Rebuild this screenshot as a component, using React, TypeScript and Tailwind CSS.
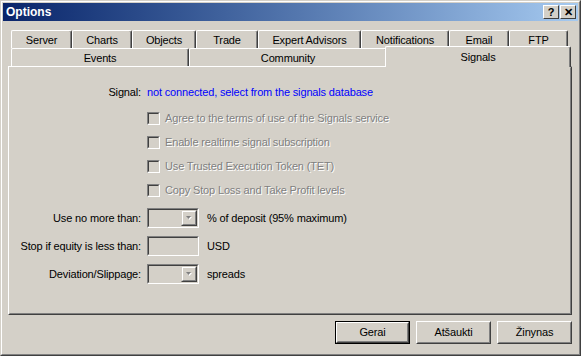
import React from "react";

const row1 = [
  { t: "Server", w: 61 },
  { t: "Charts", w: 60 },
  { t: "Objects", w: 64 },
  { t: "Trade", w: 62 },
  { t: "Expert Advisors", w: 103 },
  { t: "Notifications", w: 88 },
  { t: "Email", w: 60 },
  { t: "FTP", w: 59 },
];

function Tab({ t, w, h = 18 }: { t: string; w: number; h?: number }) {
  return (
    <div
      className="flex items-center justify-center border-l border-t border-r border-l-white border-t-white border-r-[#404040] rounded-tl-[2px] rounded-tr-[2px] shadow-[inset_-1px_0_0_#808080] text-black"
      style={{ width: w, height: h }}
    >
      <span className="pt-[1px]">{t}</span>
    </div>
  );
}

function Sunken({ w, h, children }: { w: number; h: number; children?: React.ReactNode }) {
  return (
    <div
      className="border border-t-[#808080] border-l-[#808080] border-r-white border-b-white bg-[#d4d0c8]"
      style={{ width: w, height: h }}
    >
      <div className="w-full h-full border border-t-[#404040] border-l-[#404040] border-r-[#d4d0c8] border-b-[#d4d0c8] flex justify-end">
        {children}
      </div>
    </div>
  );
}

function Check({ label }: { label: string }) {
  return (
    <div className="flex items-center h-[13px]">
      <Sunken w={13} h={13} />
      <span className="ml-[5px] text-[#808080] [text-shadow:1px_1px_0_#ffffff]">{label}</span>
    </div>
  );
}

function Combo() {
  return (
    <Sunken w={52} h={20}>
      <div className="w-[16px] h-full border border-t-[#d4d0c8] border-l-[#d4d0c8] border-r-[#404040] border-b-[#404040] bg-[#d4d0c8]">
        <div className="w-full h-full border border-t-white border-l-white border-r-[#808080] border-b-[#808080] flex items-center justify-center">
          <svg width="7" height="5" viewBox="0 0 7 5">
            <path d="M1 1h5l-2.5 3z" fill="#ffffff" />
            <path d="M0 0h5L2.5 3z" fill="#808080" />
          </svg>
        </div>
      </div>
    </Sunken>
  );
}

function Btn({ t, def }: { t: string; def?: boolean }) {
  return (
    <div className={"w-[75px] h-[23px] " + (def ? "border border-black" : "")}>
      <div className="w-full h-full border border-t-white border-l-white border-r-[#404040] border-b-[#404040]">
        <div className="w-full h-full border border-t-[#d4d0c8] border-l-[#d4d0c8] border-r-[#808080] border-b-[#808080] flex items-center justify-center text-black">
          {t}
        </div>
      </div>
    </div>
  );
}

export default function App() {
  return (
    <div className="w-[581px] h-[356px] bg-[#d4d0c8] font-['Liberation_Sans',Arial,sans-serif] text-[11px] leading-[13px] tracking-[-0.15px] select-none">
      <div className="w-full h-full border border-t-[#d4d0c8] border-l-[#d4d0c8] border-r-[#404040] border-b-[#404040]">
        <div className="w-full h-full border border-t-white border-l-white border-r-[#808080] border-b-[#808080] p-[1px] flex flex-col">
          {/* title bar */}
          <div className="h-[18px] flex items-center bg-gradient-to-r from-[#0a246a] to-[#a6caf0] pl-[3px] pr-[2px]">
            <span className="text-white font-bold text-[12px] tracking-normal">Options</span>
            <div className="ml-auto flex">
              {["?", "✕"].map((c, i) => (
                <div
                  key={i}
                  className="w-[16px] h-[14px] border border-t-white border-l-white border-r-[#404040] border-b-[#404040] bg-[#d4d0c8] flex items-center justify-center font-bold text-black text-[11px]"
                  style={{ marginLeft: i ? 1 : 0 }}
                >
                  {c}
                </div>
              ))}
            </div>
          </div>

          {/* tabs */}
          <div className="pl-[5px] pt-[9px] flex flex-col">
            <div className="flex pl-[3px]">
              {row1.map((r) => (
                <Tab key={r.t} t={r.t} w={r.w} />
              ))}
            </div>
            <div className="flex pl-[3px] h-[18px] items-end">
              <Tab t="Events" w={178} />
              <Tab t="Community" w={198} />
              <div className="relative w-[184px] h-[18px]">
                <div className="absolute left-[-2px] top-[-2px] w-[186px] h-[21px] bg-[#d4d0c8] border-l border-t border-r border-l-white border-t-white border-r-[#404040] rounded-tl-[2px] rounded-tr-[2px] shadow-[inset_-1px_0_0_#808080] flex justify-center pt-[4px] z-10">
                  Signals
                </div>
              </div>
            </div>

            {/* panel */}
            <div className="w-[564px] h-[249px] border border-t-white border-l-white border-r-[#404040] border-b-[#404040]">
              <div className="w-full h-full border border-transparent border-r-[#808080] border-b-[#808080] pt-[18px] flex flex-col">
                <div className="flex items-center h-[13px]">
                  <span className="w-[131px] text-right">Signal:</span>
                  <span className="ml-[6px] text-[#0000ff]">not connected, select from the signals database</span>
                </div>
                <div className="ml-[137px] mt-[13px] flex flex-col gap-[11px]">
                  <Check label="Agree to the terms of use of the Signals service" />
                  <Check label="Enable realtime signal subscription" />
                  <Check label="Use Trusted Execution Token (TET)" />
                  <Check label="Copy Stop Loss and Take Profit levels" />
                </div>
                <div className="mt-[11px] flex flex-col gap-[8px]">
                  <div className="flex items-center h-[20px]">
                    <span className="w-[131px] text-right">Use no more than:</span>
                    <div className="ml-[6px]"><Combo /></div>
                    <span className="ml-[8px]">% of deposit (95% maximum)</span>
                  </div>
                  <div className="flex items-center h-[20px]">
                    <span className="w-[131px] text-right">Stop if equity is less than:</span>
                    <div className="ml-[6px]"><Sunken w={52} h={20} /></div>
                    <span className="ml-[8px]">USD</span>
                  </div>
                  <div className="flex items-center h-[20px]">
                    <span className="w-[131px] text-right">Deviation/Slippage:</span>
                    <div className="ml-[6px]"><Combo /></div>
                    <span className="ml-[8px]">spreads</span>
                  </div>
                </div>
              </div>
            </div>
          </div>

          {/* buttons */}
          <div className="flex justify-end gap-[6px] pr-[6px] pt-[6px]">
            <Btn t="Gerai" def />
            <Btn t="Atšaukti" />
            <Btn t="Žinynas" />
          </div>
        </div>
      </div>
    </div>
  );
}
